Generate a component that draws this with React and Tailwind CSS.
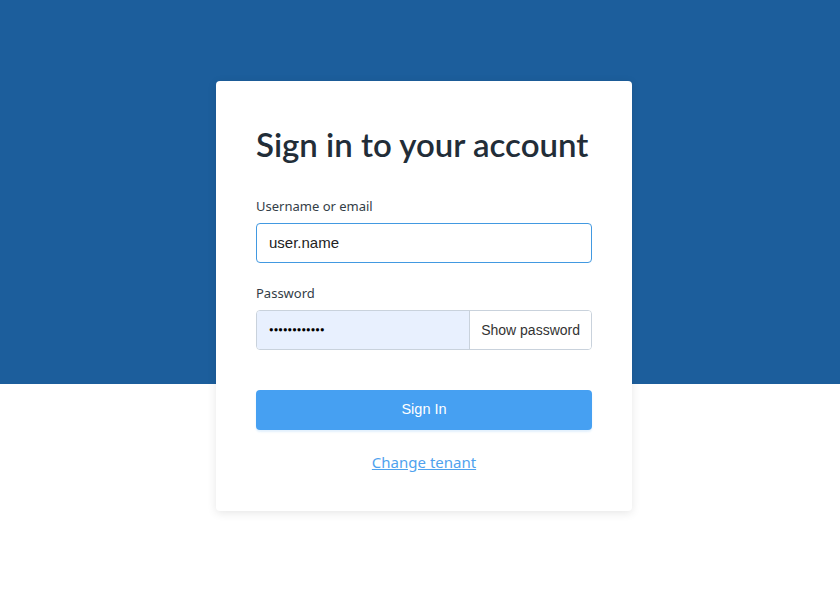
export default function App() {
  return (
    <div className="relative h-[598px] w-[840px] bg-white font-['Noto_Sans',sans-serif]">
      <div className="absolute inset-x-0 top-0 h-[384px] bg-[#1c5e9c]" />
      <div className="relative flex justify-center pt-[81px] pl-2">
        <div className="w-[416px] rounded-[4px] bg-white px-10 pt-[43px] pb-[37px] shadow-[0_2px_10px_rgba(0,0,0,0.1)]">
          <h1 className="whitespace-nowrap font-['Lato',sans-serif] text-[33px] font-semibold leading-[40px] text-[#222d38]">
            Sign in to your account
          </h1>
          <div className="mt-[32px]">
            <label className="block text-[13px] leading-[20px] text-[#333d47]">Username or email</label>
            <div className="mt-[7px] flex h-10 items-center rounded-[4px] border border-[#4299e1] px-3 font-['Liberation_Sans',sans-serif] text-[15px] text-[#222]">
              user.name
            </div>
          </div>
          <div className="mt-[20px]">
            <label className="block text-[13px] leading-[20px] text-[#333d47]">Password</label>
            <div className="mt-[7px] flex h-10 overflow-hidden rounded-[4px] border border-[#c9d2dc]">
              <div className="flex flex-1 items-center bg-[#e8f0fe] px-3 font-['Liberation_Sans',sans-serif] text-[7.5px] tracking-[0.1px] text-black">
                ●●●●●●●●●●●●
              </div>
              <button className="border-l border-[#c9d2dc] bg-white px-[11px] font-['Liberation_Sans',sans-serif] text-[14px] text-[#333]">
                Show password
              </button>
            </div>
          </div>
          <button className="mt-[40px] h-10 w-full rounded-[4px] bg-[#46a0f2] font-['Liberation_Sans',sans-serif] text-[14.5px] text-white shadow-[0_2px_2px_rgba(70,160,242,0.15)]">
            Sign In
          </button>
          <div className="mt-[20px] text-center">
            <a className="text-[15px] leading-[24px] text-[#4fa2ee] underline">Change tenant</a>
          </div>
        </div>
      </div>
    </div>
  );
}
